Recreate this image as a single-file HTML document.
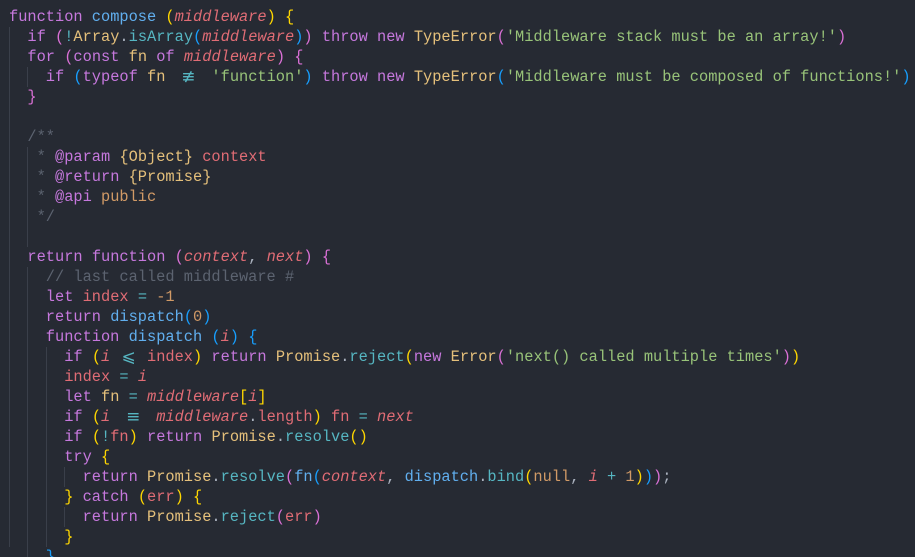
<!DOCTYPE html>
<html><head><meta charset="utf-8"><style>
html,body{margin:0;padding:0;background:#262a33;width:915px;height:557px;overflow:hidden}
#c{position:relative;padding-top:7px;font-family:"Liberation Mono",monospace;font-size:15.33px;color:#abb2bf}
.l{height:20px;line-height:20px;white-space:pre;padding-left:9px}
.g{position:absolute;width:1px;background:#3a3f4a}
.k{color:#c678dd}.f{color:#61afef}.p{color:#e06c75;font-style:italic}.v{color:#e06c75}
.t{color:#e5c07b}.m{color:#56b6c2}.s{color:#98c379}.o{color:#56b6c2}.n{color:#d19a66}
.c{color:#5c6370}.b1{color:#ffd700}.b2{color:#da70d6}.b3{color:#179fff}.w{color:#c8ccd4}
.lg{display:inline-block;text-align:center;color:#56b6c2;font-family:"DejaVu Sans",sans-serif;font-size:17px;line-height:20px;vertical-align:top;overflow:hidden;height:20px}
</style></head><body><div id="c">
<div class="g" style="left:9px;top:27px;height:520px"></div>
<div class="g" style="left:27px;top:67px;height:20px"></div>
<div class="g" style="left:27px;top:147px;height:100px"></div>
<div class="g" style="left:27px;top:267px;height:290px"></div>
<div class="g" style="left:46px;top:347px;height:200px"></div>
<div class="g" style="left:64px;top:467px;height:20px"></div>
<div class="g" style="left:64px;top:507px;height:20px"></div>
<div class="l"><span class="k">function</span> <span class="f">compose</span> <span class="b1">(</span><span class="p">middleware</span><span class="b1">)</span> <span class="b1">{</span></div>
<div class="l">  <span class="k">if</span> <span class="b2">(</span><span class="o">!</span><span class="t">Array</span>.<span class="m">isArray</span><span class="b3">(</span><span class="p">middleware</span><span class="b3">)</span><span class="b2">)</span> <span class="k">throw</span> <span class="k">new</span> <span class="t">TypeError</span><span class="b2">(</span><span class="s">'Middleware stack must be an array!'</span><span class="b2">)</span></div>
<div class="l">  <span class="k">for</span> <span class="b2">(</span><span class="k">const</span> <span class="t">fn</span> <span class="k">of</span> <span class="p">middleware</span><span class="b2">)</span> <span class="b2">{</span></div>
<div class="l">    <span class="k">if</span> <span class="b3">(</span><span class="k">typeof</span> <span class="t">fn</span> <span class="lg" style="width:27.6px">≢</span> <span class="s">'function'</span><span class="b3">)</span> <span class="k">throw</span> <span class="k">new</span> <span class="t">TypeError</span><span class="b3">(</span><span class="s">'Middleware must be composed of functions!'</span><span class="b3">)</span></div>
<div class="l">  <span class="b2">}</span></div>
<div class="l"> </div>
<div class="l">  <span class="c">/**</span></div>
<div class="l">   <span class="c">*</span> <span class="k">@param</span> <span class="t">{Object}</span> <span class="v">context</span></div>
<div class="l">   <span class="c">*</span> <span class="k">@return</span> <span class="t">{Promise}</span></div>
<div class="l">   <span class="c">*</span> <span class="k">@api</span> <span class="n">public</span></div>
<div class="l">   <span class="c">*/</span></div>
<div class="l"> </div>
<div class="l">  <span class="k">return</span> <span class="k">function</span> <span class="b2">(</span><span class="p">context</span>, <span class="p">next</span><span class="b2">)</span> <span class="b2">{</span></div>
<div class="l">    <span class="c">// last called middleware #</span></div>
<div class="l">    <span class="k">let</span> <span class="v">index</span> <span class="o">=</span> <span class="n">-1</span></div>
<div class="l">    <span class="k">return</span> <span class="f">dispatch</span><span class="b3">(</span><span class="n">0</span><span class="b3">)</span></div>
<div class="l">    <span class="k">function</span> <span class="f">dispatch</span> <span class="b3">(</span><span class="p">i</span><span class="b3">)</span> <span class="b3">{</span></div>
<div class="l">      <span class="k">if</span> <span class="b1">(</span><span class="p">i</span> <span class="lg" style="width:18.4px">⩽</span> <span class="v">index</span><span class="b1">)</span> <span class="k">return</span> <span class="t">Promise</span>.<span class="m">reject</span><span class="b1">(</span><span class="k">new</span> <span class="t">Error</span><span class="b2">(</span><span class="s">'next() called multiple times'</span><span class="b2">)</span><span class="b1">)</span></div>
<div class="l">      <span class="v">index</span> <span class="o">=</span> <span class="p">i</span></div>
<div class="l">      <span class="k">let</span> <span class="t">fn</span> <span class="o">=</span> <span class="p">middleware</span><span class="b1">[</span><span class="p">i</span><span class="b1">]</span></div>
<div class="l">      <span class="k">if</span> <span class="b1">(</span><span class="p">i</span> <span class="lg" style="width:27.6px">≡</span> <span class="p">middleware</span>.<span class="v">length</span><span class="b1">)</span> <span class="v">fn</span> <span class="o">=</span> <span class="p">next</span></div>
<div class="l">      <span class="k">if</span> <span class="b1">(</span><span class="o">!</span><span class="v">fn</span><span class="b1">)</span> <span class="k">return</span> <span class="t">Promise</span>.<span class="m">resolve</span><span class="b1">()</span></div>
<div class="l">      <span class="k">try</span> <span class="b1">{</span></div>
<div class="l">        <span class="k">return</span> <span class="t">Promise</span>.<span class="m">resolve</span><span class="b2">(</span><span class="f">fn</span><span class="b3">(</span><span class="p">context</span>, <span class="f">dispatch</span>.<span class="m">bind</span><span class="b1">(</span><span class="n">null</span>, <span class="p">i</span> <span class="o">+</span> <span class="n">1</span><span class="b1">)</span><span class="b3">)</span><span class="b2">)</span>;</div>
<div class="l">      <span class="b1">}</span> <span class="k">catch</span> <span class="b1">(</span><span class="v">err</span><span class="b1">)</span> <span class="b1">{</span></div>
<div class="l">        <span class="k">return</span> <span class="t">Promise</span>.<span class="m">reject</span><span class="b2">(</span><span class="v">err</span><span class="b2">)</span></div>
<div class="l">      <span class="b1">}</span></div>
<div class="l">    <span class="b3">}</span></div>
</div></body></html>
